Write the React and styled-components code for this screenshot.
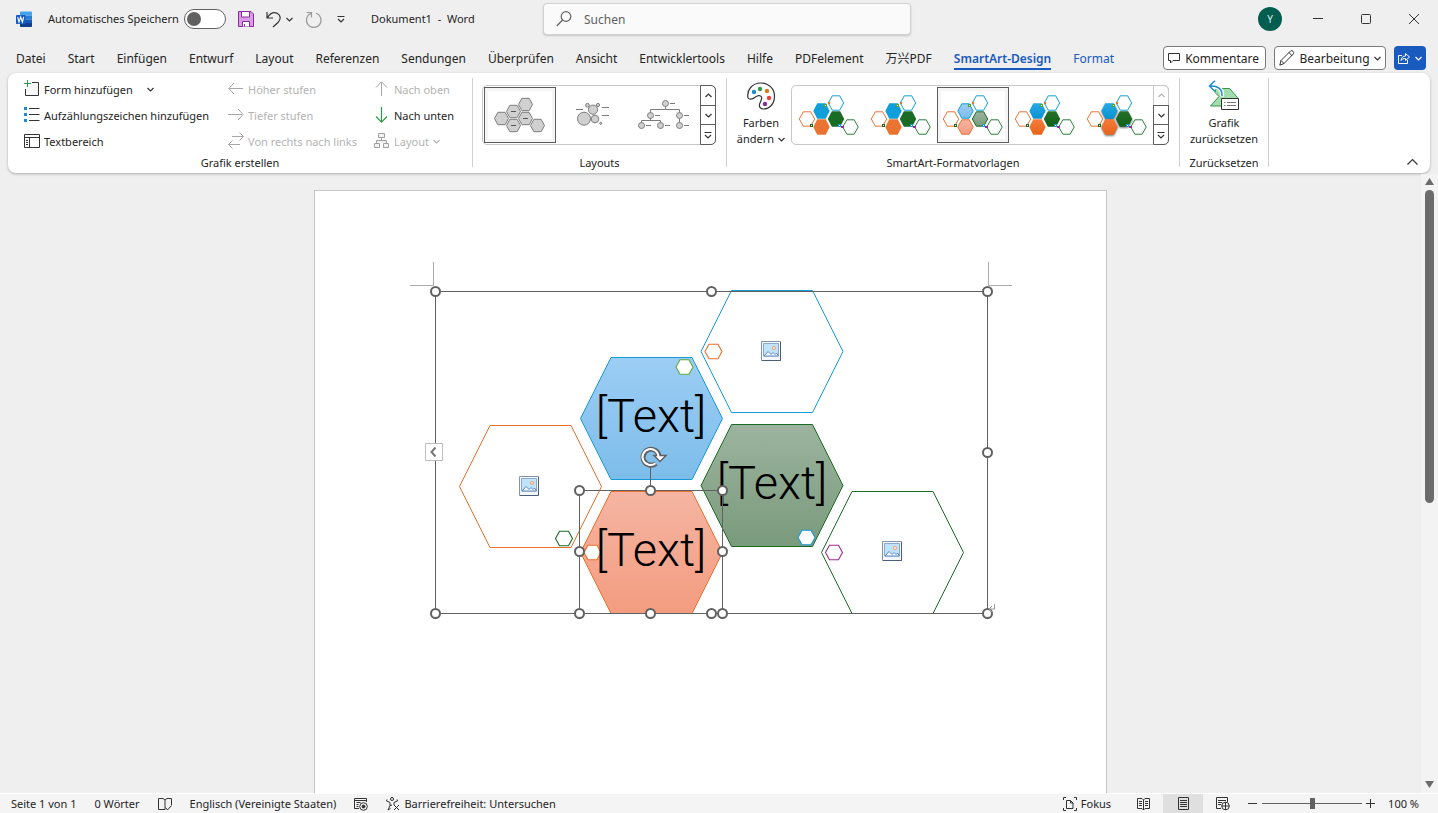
import React from "react";
import styled, { createGlobalStyle, css } from "styled-components";

const GlobalStyle = createGlobalStyle`
  * { box-sizing: border-box; }
  body { margin: 0; background: #efefef; overflow: hidden; }
  body, button, input { font-family: "Noto Sans", "Noto Sans CJK SC", sans-serif; color: #242424; }
  button { border: 0; background: none; padding: 0; margin: 0; }
  svg { display: block; flex: none; overflow: visible; }
`;

const Window = styled.div`
  height: 100vh;
  display: flex;
  flex-direction: column;
  background: #efefef;
  font-size: 11px;
  line-height: 16px;
`;

/* ---------- title bar ---------- */
const TitleBar = styled.header`
  display: grid;
  grid-template-columns: minmax(0, 1fr) 368px minmax(0, 1fr);
  align-items: center;
  height: 38px;
  padding-left: 16px;
`;
const TitleLeft = styled.div`
  display: flex;
  align-items: center;
  white-space: nowrap;
`;
const AutoSave = styled.label`
  display: flex;
  align-items: center;
  width: 178px;
  margin-left: 16px;
  justify-content: space-between;
`;
const Toggle = styled.input`
  appearance: none;
  width: 42px;
  height: 20px;
  margin: 0;
  border: 1px solid #616161;
  border-radius: 10px;
  background: #fff;
  &::before {
    content: "";
    display: block;
    width: 14px;
    height: 14px;
    margin: 2px;
    border-radius: 50%;
    background: #616161;
  }
`;
const QuickTools = styled.div`
  display: flex;
  align-items: center;
  gap: 12px;
  margin-left: ${(p) => (p.$apart ? 16 : 12)}px;
`;
const SplitTool = styled.span`
  display: flex;
  align-items: center;
  gap: 5px;
`;
const IconButton = styled.button`
  display: flex;
  align-items: center;
  justify-content: center;
`;
const DocTitle = styled.h1`
  margin: 0 0 0 26px;
  font-size: 11px;
  font-weight: 400;
  white-space: pre;
`;
const SearchBox = styled.label`
  display: flex;
  align-items: center;
  gap: 12px;
  height: 32px;
  padding: 0 12px;
  background: #fafafa;
  border: 1px solid #d1d1d1;
  border-radius: 4px;
  box-shadow: 0 1px 2px rgba(0, 0, 0, 0.18);
  input {
    flex: 1;
    border: 0;
    padding: 0;
    background: none;
    font-size: 12px;
    outline: 0;
  }
  input::placeholder { color: #616161; opacity: 1; }
`;
const TitleRight = styled.div`
  display: flex;
  justify-content: flex-end;
  align-items: center;
`;
const Avatar = styled.button`
  width: 24px;
  height: 24px;
  margin-right: 12px;
  border-radius: 50%;
  background: #035e50;
  color: #d7eee9;
  font-size: 10px;
`;
const WindowButton = styled(IconButton)`
  width: 48px;
  height: 38px;
`;

/* ---------- tabs ---------- */
const TabRow = styled.div`
  display: flex;
  justify-content: space-between;
  align-items: center;
  height: 35px;
  padding: 5px 12px 0 16px;
`;
const Tabs = styled.nav`
  display: flex;
  gap: 22px;
  padding-top: 2px;
`;
const Tab = styled.a`
  color: ${(p) => (p.$blue ? "#185abd" : "#242424")};
  font-size: 12px;
  line-height: 18px;
  white-space: nowrap;
  text-decoration: none;
  font-weight: ${(p) => (p.$active ? 600 : 400)};
  box-shadow: ${(p) => (p.$active ? "0 2px 0 #185abd" : "none")};
`;
const TabActions = styled.div`
  display: flex;
  gap: 8px;
`;
const ActionButton = styled.button`
  display: flex;
  align-items: center;
  justify-content: space-between;
  width: ${(p) => p.$width}px;
  height: 24px;
  padding: 0 ${(p) => (p.$menu ? 4 : 6)}px 0 4px;
  border-radius: 4px;
  font-size: 12px;
  ${(p) =>
    p.$primary
      ? css`background: #185abd;`
      : css`background: #fff; border: 1px solid #7a7a7a;`}
`;

/* ---------- ribbon ---------- */
const Ribbon = styled.section`
  display: flex;
  height: 100px;
  margin: 0 8px;
  padding: 5px 0 6px;
  background: #fff;
  border-radius: 8px;
  box-shadow: 0 1px 3px rgba(0, 0, 0, 0.28);
`;
const Group = styled.div`
  display: flex;
  flex-direction: column;
  justify-content: space-between;
  width: ${(p) => p.$width}px;
  border-right: 1px solid #d1d1d1;
`;
const Caption = styled.div`
  height: 12px;
  line-height: 16px;
  text-align: center;
`;
const CommandGrid = styled.div`
  display: grid;
  grid-template-columns: 204px 146px 1fr;
  grid-template-rows: repeat(3, 26px);
  grid-auto-flow: column;
  padding-left: 16px;
  margin-top: -2px;
`;
const Command = styled.button`
  display: flex;
  align-items: center;
  gap: 4px;
  color: ${(p) => (p.disabled ? "#b3b3b3" : "#242424")};
  font-size: 11px;
  white-space: nowrap;
`;
const MenuMark = styled.span`
  margin-left: ${(p) => (p.$apart ? 10 : 0)}px;
`;
const GroupBody = styled.div`
  display: flex;
  padding: 7px ${(p) => p.$right || 0}px 0 ${(p) => p.$left || 0}px;
`;
const Gallery = styled.div`
  display: flex;
  flex: 1;
  height: 60px;
  padding: 1px 0 1px 1px;
  border: 1px solid #c8c8c8;
  border-radius: 5px;
`;
const Tile = styled.button`
  width: 72px;
  height: 56px;
  ${(p) =>
    p.$selected &&
    css`
      background: #fff;
      box-shadow: inset 0 0 0 1px #5c5c5c, inset 0 0 0 4px #f5f5f5;
    `}
`;
const Scroller = styled.div`
  display: flex;
  flex-direction: column;
  width: 16px;
  margin: -2px -1px -2px auto;
`;
const ScrollButton = styled(IconButton)`
  flex: 1;
  border: 1px solid ${(p) => (p.disabled ? "#c8c8c8" : "#5c5c5c")};
  & + & { margin-top: -1px; }
  &:first-child { border-top-right-radius: 5px; }
  &:last-child { border-bottom-right-radius: 5px; }
`;
const BigCommand = styled.button`
  display: flex;
  flex: none;
  flex-direction: column;
  align-items: center;
  width: ${(p) => p.$width}px;
  padding-left: ${(p) => p.$indent || 0}px;
  margin-top: -3px;
  font-size: 11px;
  line-height: 16px;
  white-space: nowrap;
  svg { margin-bottom: 5px; }
  span { display: flex; align-items: center; gap: 4px; }
  span svg { margin: 0; }
`;
const RibbonEnd = styled.div`
  display: flex;
  flex: 1;
  align-items: flex-end;
  justify-content: flex-end;
  padding: 0 12px 1px 0;
`;

/* ---------- document ---------- */
const Workspace = styled.main`
  display: flex;
  flex: 1;
  min-height: 0;
  margin-top: 1px;
`;
const Canvas = styled.div`
  flex: 1;
  display: flex;
  justify-content: center;
  overflow: hidden;
  padding-top: 16px;
`;
const Page = styled.article`
  width: 793px;
  min-height: 1122px;
  padding-top: 70px;
  background: #fff;
  border: 1px solid #c6c6c6;
  svg { margin: 0 auto; }
`;
const ScrollBar = styled.div`
  display: flex;
  flex-direction: column;
  align-items: center;
  width: 17px;
  padding: 4px 0;
  background: #f3f3f3;
`;
const ScrollTrack = styled.div`
  flex: 1;
  padding-top: 4px;
`;
const ScrollThumb = styled.div`
  width: 9px;
  height: 53%;
  border-radius: 5px;
  background: #6b6b6b;
`;

/* ---------- status bar ---------- */
const StatusBar = styled.footer`
  display: flex;
  justify-content: space-between;
  height: 20px;
  background: #f4f4f4;
  border-top: 1px solid #fff;
`;
const StatusSide = styled.div`
  display: flex;
  align-items: center;
  gap: ${(p) => p.$gap}px;
  padding: ${(p) => (p.$end ? "0 19px 0 0" : "0 0 0 11px")};
`;
const StatusItem = styled.button`
  display: flex;
  align-items: center;
  gap: 4px;
  font-size: 11px;
  white-space: nowrap;
`;
const Views = styled.div`
  display: flex;
  margin-left: 12px;
`;
const ViewButton = styled(IconButton)`
  width: 40px;
  height: 19px;
  background: ${(p) => (p.$active ? "#dfdfdf" : "none")};
`;
const Zoom = styled.div`
  display: flex;
  align-items: center;
  gap: 4px;
  margin: 0 12px 0 5px;
`;
const ZoomSlider = styled.input`
  appearance: none;
  width: 100px;
  height: 11px;
  margin: 0;
  background: linear-gradient(#616161, #616161) center / 100% 1px no-repeat;
  &::-webkit-slider-thumb {
    appearance: none;
    width: 5px;
    height: 11px;
    background: #616161;
  }
`;

const Line = ({ w = 16, h = 16, color = "#333", children, sw = 1 }) => (
  <svg width={w} height={h} viewBox={`0 0 ${w} ${h}`} fill="none" stroke={color} strokeWidth={sw} aria-hidden="true">
    {children}
  </svg>
);

const Chevron = ({ up, color = "#333", sw = 1.2 }) => (
  <Line w={7} h={5} color={color} sw={sw}>
    <path d={up ? "M.5 4l3-3 3 3" : "M.5 1l3 3 3-3"} />
  </Line>
);
const ChevronBar = () => (
  <Line w={8} h={8} sw={1.2}>
    <path d="M.5 1.500h7M1 4l3 3 3-3" />
  </Line>
);

const WordLogo = () => (
  <svg width="16" height="16" viewBox="0 0 16 16" aria-hidden="true">
    <path fill="#41a5ee" d="M4 1.200Q4 .5 4.700.500H15.300Q16 .5 16 1.200V4.500H4z" />
    <path fill="#2b7cd3" d="M4 4.500h12v4H4z" />
    <path fill="#185abd" d="M4 8.500h12v3.500H4z" />
    <path fill="#103f91" d="M4 12h12v3.200q0 .8-.8.8H4.800Q4 16 4 15.200z" />
    <rect y="4" width="9.500" height="9" rx=".8" fill="#185abd" />
    <path fill="none" stroke="#fff" strokeWidth="1.100" d="M1.700 6l1.300 5 1.700-5 1.700 5 1.300-5" />
  </svg>
);
const SaveIcon = () => (
  <Line w={16} h={16} color="#8a2a9c">
    <path d="M.5.500h12.500l2.500 2.500v12.500H.5z" fill="#d99be3" />
    <path d="M3.500.500h8v5.500h-8zM4.500 15.500V10.500h7v5M6.500 13v2.500" fill="#fff" />
  </Line>
);
const UndoIcon = () => (
  <Line w={15} h={17} sw={1.2}>
    <path d="M1 1v6h6M1.200 6.800C4 2.500 8 .8 11.500 2.500c3.500 2 3.500 6 .5 9L7 16" />
  </Line>
);
const RedoIcon = () => (
  <Line w={16} h={17} color="#9c9c9c" sw={1.2}>
    <path d="M1.500 1.500H6.500v5M6.200 2.300A7.300 7.300 0 1 0 11 2.200" />
  </Line>
);

/* Flat-sided hexagon given by its centre, width and height. */
const hexPoints = (cx, cy, w, h, inset) => {
  const x = w / 2;
  const y = h / 2;
  const k = x - inset;
  return `${cx - x},${cy} ${cx - k},${cy - y} ${cx + k},${cy - y} ${cx + x},${cy} ${cx + k},${cy + y} ${cx - k},${cy + y}`;
};
const Hex = ({ cx, cy, w, h, inset, ...rest }) => <polygon points={hexPoints(cx, cy, w, h, inset)} {...rest} />;

const HexLayoutThumb = () => (
  <svg width="72" height="56" viewBox="0 0 72 56" stroke="#7c7c7c" aria-hidden="true">
    {[[17.5, 31.5], [29.5, 24.5], [29.5, 38.5], [41.5, 17.5], [41.5, 31.5], [53.5, 38.5]].map(([x, y]) => (
      <Hex key={`${x}-${y}`} cx={x} cy={y} w={14} h={12.4} inset={3.4} fill="#d0d0d0" />
    ))}
    <path d="M27 24.500h5M27 38.500h5M39 31.500h5" stroke="#555" />
  </svg>
);
const BubbleLayoutThumb = () => (
  <svg width="72" height="56" viewBox="0 0 72 56" stroke="#7c7c7c" fill="#d0d0d0" aria-hidden="true">
    <circle cx="28" cy="31.700" r="6.500" />
    <circle cx="39" cy="32" r="3.800" />
    <circle cx="37" cy="22.700" r="4.600" />
    <circle cx="31.500" cy="18.300" r="1.900" />
    <circle cx="42" cy="18" r="1.600" />
    <circle cx="44.700" cy="36.300" r="1" />
    <path d="M20 22.500h7M46 20.500h7M46 28.500h7" />
  </svg>
);
const TreeLayoutThumb = () => (
  <svg width="72" height="56" viewBox="0 0 72 56" stroke="#7c7c7c" fill="none" aria-hidden="true">
    <path d="M37.500 19v3.500M22.500 26v-3.500h29V38M22.500 31v2.500M13.500 36v-2.500h19V36" />
    {[[37.5, 16.5], [22.5, 28.5], [51.5, 28.5], [13.5, 38.5], [32.5, 38.5], [51.5, 38.5]].map(([x, y]) => (
      <g key={`${x}-${y}`}>
        <circle cx={x} cy={y} r="3" fill="#d0d0d0" />
        <path d={`M${x + 4.5} ${y}h5`} />
      </g>
    ))}
  </svg>
);

const styleLooks = {
  flat: { blue: ["#119fda", "#119fda"], orange: ["#ea7331", "#ea7331"], green: ["#1a6b24", "#1a6b24"] },
  subtle: { blue: ["#9ccdf5", "#7dbdea"], orange: ["#f5b5a2", "#f39c80"], green: ["#9cb49f", "#7a9a7c"] },
  intense: { blue: ["#27a9e6", "#0992cf"], orange: ["#f47b3c", "#e8651b"], green: ["#25702b", "#0f5f18"] },
};
const StyleThumb = ({ id, look, seams, shadow }) => {
  const c = styleLooks[look];
  const open = { w: 15.4, h: 14.4, inset: 4 };
  const solid = seams ? { w: 15.4, h: 14.4, inset: 4 } : { w: 16.4, h: 15.4, inset: 4 };
  return (
    <svg width="72" height="56" viewBox="0 0 72 56" fill="none" aria-hidden="true">
      <defs>
        {Object.entries(c).map(([name, [from, to]]) => (
          <linearGradient key={name} id={`${id}-${name}`} x1="0" y1="0" x2="0" y2="1">
            <stop offset="0" stopColor={from} />
            <stop offset="1" stopColor={to} />
          </linearGradient>
        ))}
      </defs>
      <Hex {...open} cx={14} cy={32} stroke="#ea7331" />
      <Hex {...open} cx={43} cy={16} stroke="#119fda" />
      <Hex {...open} cx={57.5} cy={40} stroke="#2e7d3a" />
      <g filter={shadow ? "drop-shadow(0 1px 1px rgba(0,0,0,.6))" : undefined}>
        <Hex {...solid} cx={28.5} cy={24} fill={`url(#${id}-blue)`} stroke={seams ? "#119fda" : "none"} />
        <Hex {...solid} cx={43} cy={32} fill={`url(#${id}-green)`} stroke={seams ? "#1a6b24" : "none"} />
        <Hex {...solid} cx={28.5} cy={40} fill={`url(#${id}-orange)`} stroke={seams ? "#ea7331" : "none"} />
      </g>
      <rect x="31.500" y="17.500" width="2" height="2" stroke="#4ea72e" fill="#fff" />
      <rect x="35" y="15" width="2" height="2" fill="#e97132" />
      <rect x="17.500" y="37.500" width="2" height="2" stroke="#1a6b24" fill="#fff" />
      <rect x="45.500" y="37.500" width="2" height="2" stroke="#119fda" fill="#fff" />
      <rect x="48" y="39" width="3" height="2" fill="#a02b93" />
    </svg>
  );
};

const PaletteIcon = () => (
  <svg width="28" height="28" viewBox="0 0 28 28" aria-hidden="true">
    <path
      fill="#fff"
      stroke="#333"
      strokeWidth="1.200"
      d="M1 16C-.5 8 5 1 14 1c8 0 13.500 6 13.500 13 0 8-5 13-11 13-3 0-4.500-2-4-4.500.5-3 3-5 2-7.500-1-2-4-1.500-6 0S3 18.500 1 16z"
    />
    <circle cx="7" cy="10" r="2.200" fill="#1e8bcd" />
    <circle cx="13" cy="7" r="2.200" fill="#2e9b45" />
    <circle cx="20" cy="9" r="2.200" fill="#ea7500" />
    <circle cx="22" cy="16" r="2.200" fill="#ee3d3d" />
    <circle cx="18" cy="22" r="2.200" fill="#8a2a9c" />
  </svg>
);
const ResetIcon = () => (
  <svg width="32" height="28" viewBox="0 2 32 28" fill="none" aria-hidden="true">
    <path d="M8 8.500h13.500l8 9V26H2.500l8.500-9.500-4-4z" fill="#a3dcae" stroke="#2e9b45" />
    <path d="M4 7c7-1 11 3 10 9.500" stroke="#fff" strokeWidth="4" />
    <path d="M7 .8L1.500 6l5.500 5.500M2 6c7.500-.5 12.500 3 12 10" stroke="#1e8bcd" strokeWidth="1.500" />
    <path d="M13.500 18.500h17v11h-17z" fill="#fff" stroke="#333" />
    <path d="M16 22.500h1.500M19 22.500h9M16 25.500h1.500M19 25.500h9" stroke="#777" />
  </svg>
);

/* ---------- SmartArt drawing ---------- */
const hexes = [
  { cx: 530.5, cy: 486.5, stroke: "#ec6f2c", fill: "none" },
  { cx: 772, cy: 351.5, stroke: "#159bd7", fill: "none" },
  { cx: 892.5, cy: 552.5, stroke: "#1a6b24", fill: "none" },
  { cx: 651.5, cy: 418.5, stroke: "#159bd7", fill: "url(#fill-blue)" },
  { cx: 772, cy: 485.5, stroke: "#1a6b24", fill: "url(#fill-green)" },
  { cx: 651.5, cy: 552.5, stroke: "#ec6f2c", fill: "url(#fill-orange)" },
];
const accents = [
  [684.5, 367, "#5aab3c"],
  [713.5, 351.5, "#ec6f2c"],
  [564, 538.5, "#1a6b24"],
  [592.5, 552.5, "#ec6f2c"],
  [806.5, 537.5, "#159bd7"],
  [834, 552.5, "#a02b93"],
];
const outerHandles = [[435.5, 291.5], [711.5, 291.5], [987.5, 291.5], [987.5, 452.5], [435.5, 613.5], [711.5, 613.5], [987.5, 613.5]];
const innerHandles = [[579.5, 490.5], [650.5, 490.5], [722.5, 490.5], [579.5, 551.5], [722.5, 551.5], [579.5, 613.5], [650.5, 613.5], [722.5, 613.5]];

const PicturePlaceholder = ({ x, y }) => (
  <g transform={`translate(${x} ${y})`}>
    <path d="M.5.500h19v19H.5z" fill="#f4f7fc" stroke="#8393ab" />
    <path d="M19.500 1v18.500H1" fill="none" stroke="#4b5e7c" />
    <path d="M2.500 2.500h15v12.500h-15z" fill="#bfe3fb" stroke="#8aa9cc" />
    <circle cx="13" cy="7" r="1.700" fill="#fde3cf" stroke="#f0a77e" />
    <path d="M3 15l4-4.500 3 3 2-2 2 2 1.500-1.500 2 3z" fill="#fff" stroke="#5a87c5" />
  </g>
);

const SmartArt = () => (
  <svg width="603" height="362" viewBox="409 261 603 362" fill="none" role="img" aria-label="SmartArt">
    <defs>
      {Object.entries(styleLooks.subtle).map(([name, [from, to]]) => (
        <linearGradient key={name} id={`fill-${name}`} x1="0" y1="0" x2="0" y2="1">
          <stop offset="0" stopColor={from} />
          <stop offset="1" stopColor={to} />
        </linearGradient>
      ))}
    </defs>
    <path d="M433.500 262v23.500H410M988.500 262v23.500H1012" stroke="#ababab" />
    {hexes.map((h) => (
      <Hex key={`${h.cx}-${h.cy}`} w={142} h={122} inset={30.5} {...h} />
    ))}
    {accents.map(([cx, cy, color]) => (
      <Hex key={`${cx}-${cy}`} cx={cx} cy={cy} w={17} h={14.6} inset={4} stroke={color} strokeWidth="1.100" fill="#fff" />
    ))}
    <PicturePlaceholder x={519} y={476} />
    <PicturePlaceholder x={761} y={341} />
    <PicturePlaceholder x={882} y={541} />
    <g fontFamily="Roboto, sans-serif" fontWeight="300" fontSize="47" fill="#000" textAnchor="middle">
      <text x="651" y="432">[Text]</text>
      <text x="772" y="499">[Text]</text>
      <text x="651" y="566">[Text]</text>
    </g>
    <g stroke="#616161">
      <path d="M435.500 291.500h552v322h-552zM579.500 613.500v-123h143v123M650.500 490v-24" />
      <g fill="#fff" strokeWidth="2">
        {[...outerHandles, ...innerHandles].map(([x, y]) => (
          <circle key={`${x}-${y}`} cx={x} cy={y} r="4.500" />
        ))}
      </g>
    </g>
    <path d="M656 463.500a8 8 0 1 1 3-7.500" stroke="#616161" strokeWidth="5" />
    <path d="M654 455.500h12l-6 6z" fill="#fff" stroke="#616161" strokeWidth="1.500" />
    <path d="M655.500 463.200a8 8 0 1 1 3-6.200" stroke="#fff" strokeWidth="2" />
    <path d="M425.500 443.500h17v17h-17z" fill="#fff" stroke="#bdbdbd" />
    <path d="M435.500 447.500l-4 4.500 4 4.500" stroke="#777" strokeWidth="2" />
    <path d="M994.500 604v5h-5.500M992 606l-3 3 3 3" stroke="#9a9a9a" />
  </svg>
);

const tabs = ["Datei", "Start", "Einfügen", "Entwurf", "Layout", "Referenzen", "Sendungen", "Überprüfen", "Ansicht", "Entwicklertools", "Hilfe", "PDFelement", "万兴PDF", "SmartArt-Design", "Format"];

const commands = [
  {
    label: "Form hinzufügen",
    menu: "far",
    icon: <Line><path d="M8 1.500h6.500v13H1.500V8" fill="#f8f8f8" /><path d="M3.500-1v7M0 2.500h7" stroke="#2e9b45" /></Line>,
  },
  {
    label: "Aufzählungszeichen hinzufügen",
    icon: <Line><path d="M5 1.500h10.500M5 7.500h10.500M5 13.500h10.500" /><path d="M0 1.500h3M0 7.500h3M0 13.500h3" stroke="#1e8bcd" strokeWidth="3" /></Line>,
  },
  {
    label: "Textbereich",
    icon: <Line><path d="M.5 1.500h15v13H.5zM.5 4.500h15M5.500 4.500v10M2 7.500h2M2 9.500h2M2 11.500h2" /></Line>,
  },
  { label: "Höher stufen", off: true, icon: <Line color="#a8a8a8"><path d="M15 7.500H1M6 2L.8 7.500 6 13" /></Line> },
  { label: "Tiefer stufen", off: true, icon: <Line color="#a8a8a8"><path d="M0 7.500h14M10 2L15.200 7.500 10 13" /></Line> },
  { label: "Von rechts nach links", off: true, icon: <Line color="#a8a8a8"><path d="M4 3.500h11.500M11.500-.5l4 4-4 4M12 11.500H.5M4.500 7.500l-4 4 4 4" /></Line> },
  { label: "Nach oben", off: true, icon: <Line color="#a8a8a8"><path d="M7.500 15V1M2 6.500L7.500.800 13 6.500" /></Line> },
  { label: "Nach unten", icon: <Line color="#2e9b45" sw={1.2}><path d="M7.500 0v15M2 9.500l5.500 5.700L13 9.500" /></Line> },
  {
    label: "Layout",
    off: true,
    menu: "near",
    icon: <Line color="#a0a0a0"><path d="M4.500.500h6v4h-6zM.5 10.500h5v4h-5zM9.500 10.500h5v4h-5zM7.500 4.500V7.500M2.500 10.500V7.500h10v3" fill="#f3f3f3" /></Line>,
  },
];

const GalleryScroller = ({ upDisabled }) => (
  <Scroller>
    <ScrollButton disabled={upDisabled} aria-label="Nach oben blättern"><Chevron up color={upDisabled ? "#b3b3b3" : "#333"} /></ScrollButton>
    <ScrollButton aria-label="Nach unten blättern"><Chevron /></ScrollButton>
    <ScrollButton aria-label="Katalog öffnen"><ChevronBar /></ScrollButton>
  </Scroller>
);

export default function App() {
  return (
    <Window>
      <GlobalStyle />
      <TitleBar>
        <TitleLeft>
          <WordLogo />
          <AutoSave>
            Automatisches Speichern
            <Toggle type="checkbox" role="switch" />
          </AutoSave>
          <QuickTools>
            <IconButton aria-label="Speichern"><SaveIcon /></IconButton>
            <SplitTool>
              <IconButton aria-label="Rückgängig"><UndoIcon /></IconButton>
              <IconButton aria-label="Rückgängig-Liste"><Chevron /></IconButton>
            </SplitTool>
            <IconButton aria-label="Wiederholen"><RedoIcon /></IconButton>
          </QuickTools>
          <QuickTools $apart>
            <IconButton aria-label="Symbolleiste anpassen"><ChevronBar /></IconButton>
          </QuickTools>
          <DocTitle>{"Dokument1  -  Word"}</DocTitle>
        </TitleLeft>
        <SearchBox>
          <Line w={16} h={16} color="#616161" sw={1.2}><circle cx="10" cy="5.500" r="4.800" /><path d="M6.500 9L.8 15" /></Line>
          <input type="search" placeholder="Suchen" aria-label="Suchen" />
        </SearchBox>
        <TitleRight>
          <Avatar>Y</Avatar>
          <WindowButton aria-label="Minimieren"><Line w={10} h={10}><path d="M0 4.500h10" /></Line></WindowButton>
          <WindowButton aria-label="Maximieren"><Line w={10} h={10}><rect x=".5" y=".5" width="9" height="9" rx="1" /></Line></WindowButton>
          <WindowButton aria-label="Schließen"><Line w={10} h={10}><path d="M0 0l10 10M10 0L0 10" /></Line></WindowButton>
        </TitleRight>
      </TitleBar>

      <TabRow>
        <Tabs>
          {tabs.map((t, i) => (
            <Tab key={t} href="#" $blue={i > 12} $active={i === 13}>{t}</Tab>
          ))}
        </Tabs>
        <TabActions>
          <ActionButton $width={103}>
            <Line w={12} h={12}><path d="M.5 1.500h11v7H5L2.500 11V8.500h-2z" /></Line>
            Kommentare
          </ActionButton>
          <ActionButton $width={112} $menu>
            <Line w={16} h={16}><path d="M.8 15.200l1.200-4.700L11.500 1q1.200-1 2.500.3t.5 2.500L5 13.500zM10 2.500L13.200 6M2 10.500l3 3" /></Line>
            Bearbeitung
            <Chevron />
          </ActionButton>
          <ActionButton $width={32} $menu $primary aria-label="Freigeben">
            <Line w={12} h={12} color="#fff"><path d="M4 3.500H.5v8h9V8M3 8.500c.3-3 2-4.500 4.500-4.500V1.500l4 3.500-4 3.500V6.500C5.500 6.500 4 7 3 8.500z" /></Line>
            <Chevron color="#fff" />
          </ActionButton>
        </TabActions>
      </TabRow>

      <Ribbon>
        <Group $width={465}>
          <CommandGrid>
            {commands.map((c) => (
              <Command key={c.label} disabled={c.off}>
                {c.icon}
                {c.label}
                {c.menu && (
                  <MenuMark $apart={c.menu === "far"}>
                    <Chevron color={c.off ? "#b3b3b3" : "#333"} />
                  </MenuMark>
                )}
              </Command>
            ))}
          </CommandGrid>
          <Caption>Grafik erstellen</Caption>
        </Group>
        <Group $width={254}>
          <GroupBody $left={9} $right={10}>
            <Gallery>
              <Tile $selected aria-label="Sechseckraster"><HexLayoutThumb /></Tile>
              <Tile aria-label="Kreisbeziehung"><BubbleLayoutThumb /></Tile>
              <Tile aria-label="Kreishierarchie"><TreeLayoutThumb /></Tile>
              <GalleryScroller />
            </Gallery>
          </GroupBody>
          <Caption>Layouts</Caption>
        </Group>
        <Group $width={453}>
          <GroupBody $right={10}>
            <BigCommand $width={64} $indent={4}>
              <PaletteIcon />
              Farben
              <span>ändern <Chevron /></span>
            </BigCommand>
            <Gallery>
              <Tile aria-label="Einfach"><StyleThumb id="s1" look="flat" /></Tile>
              <Tile aria-label="Weiße Kontur"><StyleThumb id="s2" look="flat" /></Tile>
              <Tile $selected aria-label="Dezent"><StyleThumb id="s3" look="subtle" seams /></Tile>
              <Tile aria-label="Moderat"><StyleThumb id="s4" look="intense" /></Tile>
              <Tile aria-label="Intensiv"><StyleThumb id="s5" look="intense" shadow /></Tile>
              <GalleryScroller upDisabled />
            </Gallery>
          </GroupBody>
          <Caption>SmartArt-Formatvorlagen</Caption>
        </Group>
        <Group $width={89}>
          <GroupBody>
            <BigCommand $width={88}>
              <ResetIcon />
              Grafik
              <span>zurücksetzen</span>
            </BigCommand>
          </GroupBody>
          <Caption>Zurücksetzen</Caption>
        </Group>
        <RibbonEnd>
          <IconButton aria-label="Menüband reduzieren"><Line w={11} h={8} sw={1.2}><path d="M.5 6.500l5-5 5 5" /></Line></IconButton>
        </RibbonEnd>
      </Ribbon>

      <Workspace>
        <Canvas>
          <Page><SmartArt /></Page>
        </Canvas>
        <ScrollBar>
          <Line w={9} h={8} color="none"><path d="M0 7L4.500 0 9 7z" fill="#6b6b6b" /></Line>
          <ScrollTrack><ScrollThumb /></ScrollTrack>
          <Line w={9} h={8} color="none"><path d="M0 0l4.500 7L9 0z" fill="#6b6b6b" /></Line>
        </ScrollBar>
      </Workspace>

      <StatusBar>
        <StatusSide $gap={18}>
          <StatusItem>Seite 1 von 1</StatusItem>
          <StatusItem>0 Wörter</StatusItem>
          <StatusItem aria-label="Rechtschreibung"><Line w={14} h={14}><path d="M7 12.500H.5V1.500H5l2 1.500v9.500zM7 3l2-1.500h4.500V8M7.500 10.500L9.500 13l4-4.500" /></Line></StatusItem>
          <StatusItem>Englisch (Vereinigte Staaten)</StatusItem>
          <StatusItem aria-label="Makroaufzeichnung"><Line w={14} h={14}><path d="M5 11.500H.5v-10h12V5M.5 3.500h12M2.500 5.500h4M2.500 7.500h2M2.500 9.500h2" /><circle cx="9.500" cy="9.500" r="3.800" /><circle cx="9.500" cy="9.500" r="1.500" fill="#333" /></Line></StatusItem>
          <StatusItem>
            <Line w={14} h={14}><circle cx="6" cy="2" r="1.500" /><path d="M1 2.500l-.5 1.500L4 5.500v3L2 13M11 2.500l.5 1.500L8 5.500V8M4 8.500L6 8M8 8l5 5M13 8l-5 5M2 13l2.500-1.500" /></Line>
            Barrierefreiheit: Untersuchen
          </StatusItem>
        </StatusSide>
        <StatusSide $end $gap={0}>
          <StatusItem>
            <Line w={14} h={14}><path d="M3 .5H.5V3M11 .500h2.500V3M3 13.500H.5V11M11 13.500h2.500V11M3.500 3.500h4l2.500 2.500v5.500H3.500zM7.500 3.500v2.500H10" /></Line>
            Fokus
          </StatusItem>
          <Views>
            <ViewButton aria-label="Lesemodus"><Line w={13} h={12}><path d="M6.500 2v10M6.500 2L5 .500H.5v10H5L6.500 12 8 10.500h4.500v-10H8zM2 3.500h3M2 5.500h3M2 7.500h3M8 3.500h3M8 5.500h3M8 7.500h3" /></Line></ViewButton>
            <ViewButton $active aria-label="Seitenlayout"><Line w={11} h={13}><path d="M.5.500h10v12H.5zM2 3.500h7M2 5.500h7M2 7.500h7M2 9.500h7" /></Line></ViewButton>
            <ViewButton aria-label="Weblayout"><Line w={14} h={13}><path d="M5 11.500H.5V.500h11V5M2 3.500h8M2 5.500h4M2 7.500h3" /><circle cx="9.500" cy="9" r="3.800" /><path d="M5.700 9h7.600M9.500 5.200v7.600" /></Line></ViewButton>
          </Views>
          <Zoom>
            <IconButton aria-label="Verkleinern"><Line w={10} h={10}><path d="M0 4.500h9" /></Line></IconButton>
            <ZoomSlider type="range" min="0" max="100" defaultValue="50" aria-label="Zoom" />
            <IconButton aria-label="Vergrößern"><Line w={10} h={10}><path d="M0 4.500h9M4.500 0v9" /></Line></IconButton>
          </Zoom>
          <StatusItem>100 %</StatusItem>
        </StatusSide>
      </StatusBar>
    </Window>
  );
}
